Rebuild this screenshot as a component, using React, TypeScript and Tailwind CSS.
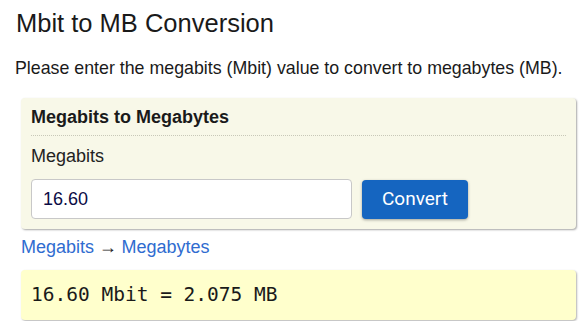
export default function App() {
  return (
    <div className="min-h-screen bg-white px-[16px] pt-[8px] text-[#222]" style={{ fontFamily: '"Liberation Sans", Arial, sans-serif' }}>
      <h1 className="text-[25.5px] leading-[30px] font-normal text-[#1a1a1a]">Mbit to MB Conversion</h1>
      <p className="mt-[20px] -ml-[1px] whitespace-nowrap text-[17.8px] leading-[21px] text-[#1a1a1a]">
        Please enter the megabits (Mbit) value to convert to megabytes (MB).
      </p>

      <div className="ml-[5px] mt-[19px] w-[555px] rounded-[4px] bg-[#f8f8e8] px-[10px] pt-[9px] pb-[10px] shadow-[1px_1px_2px_rgba(0,0,0,0.35)]">
        <h2 className="border-b border-dotted border-[#c8c8b8] pb-[7px] text-[18px] leading-[21px] font-bold text-[#1a1a1a]">
          Megabits to Megabytes
        </h2>
        <label className="mt-[10px] block text-[18px] leading-[21px] text-[#222]">Megabits</label>
        <div className="mt-[12px] flex items-center gap-[10px]">
          <input
            type="text"
            defaultValue="16.60"
            className="h-[40px] w-[321px] rounded-[4px] border border-[#c8c8c8] bg-white px-[11px] text-[18px] text-[#0b0b45] outline-none"
          />
          <button
            className="h-[39px] w-[106px] rounded-[4px] bg-[#1565c0] text-[19px] font-normal text-white shadow-[0_1px_3px_rgba(0,0,0,0.35)]"
            style={{ fontFamily: 'Roboto, sans-serif' }}
          >
            Convert
          </button>
        </div>
      </div>

      <div className="ml-[5px] mt-[6px] text-[18px] leading-[22px]">
        <a href="#" className="text-[#2f6cd0]">Megabits</a>
        <span className="text-[#222]" style={{ fontFamily: '"Noto Sans", sans-serif' }}> → </span>
        <a href="#" className="text-[#2f6cd0]">Megabytes</a>
      </div>

      <div
        className="ml-[5px] mt-[12px] flex h-[50px] w-[555px] items-center rounded-[4px] bg-[#ffffcc] px-[10px] text-[19.5px] text-[#1a1a1a] shadow-[1px_1px_2px_rgba(0,0,0,0.3)]"
        style={{ fontFamily: '"DejaVu Sans Mono", monospace' }}
      >
        16.60 Mbit = 2.075 MB
      </div>
    </div>
  )
}
